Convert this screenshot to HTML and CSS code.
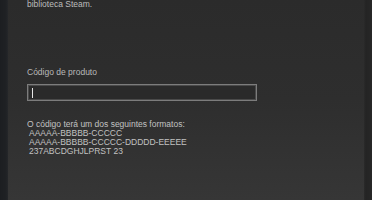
FILE: index.html
```html
<!DOCTYPE html>
<html lang="pt">
  <head>
    <meta charset="UTF-8" />
    <meta name="viewport" content="width=device-width, initial-scale=1.0" />
    <title>Ativar um produto</title>
    <link rel="stylesheet" href="styles.css">
  </head>
  <body>
    <div class="window">
      <div class="side_left"></div>
      <div class="panel">
        <p class="intro">biblioteca Steam.</p>
        <label class="field_label" for="code">Código de produto</label>
        <div class="code_input" id="code"><span class="caret"></span></div>
        <div class="formats">
          <p>O código terá um dos seguintes formatos:</p>
          <p class="fmt">AAAAA-BBBBB-CCCCC</p>
          <p class="fmt">AAAAA-BBBBB-CCCCC-DDDDD-EEEEE</p>
          <p class="fmt">237ABCDGHJLPRST 23</p>
        </div>
      </div>
      <div class="side_right"></div>
    </div>
  </body>
</html>
```
FILE: styles.css
```css
* {
  margin: 0;
  padding: 0;
  box-sizing: border-box;
}
body {
  background: #2c2c2c;
  font-family: "Liberation Sans", Arial, sans-serif;
  font-size: 8.5px;
  line-height: 9px;
  color: #bdbdbd;
}
.window {
  display: flex;
  width: 372px;
  height: 200px;
  overflow: hidden;
}
.side_left {
  width: 8px;
  background: linear-gradient(to right, #1c1e21 0, #1f2124 6px, #25272a 8px);
}
.side_right {
  width: 8px;
  background: linear-gradient(to right, #2a2a2a 0, #242424 2px, #272727 8px);
}
.panel {
  flex: 1;
  display: flex;
  flex-direction: column;
  align-items: flex-start;
  padding-left: 19px;
  background: linear-gradient(to bottom, #2b2b2b 0, #2e2e2e 100px, #363636 200px);
}
.intro {
  margin-top: 0;
}
.field_label {
  margin-top: 59px;
  color: #b9b9b9;
}
.code_input {
  margin-top: 7px;
  width: 230px;
  height: 17px;
  border: 1px solid #7c7c7c;
  box-shadow: inset 0 0 0 1px #4a4a4a;
  background: #2a2a2a;
  padding: 3px 0 0 4px;
}
.caret {
  display: block;
  width: 1px;
  height: 10px;
  background: #e6e6e6;
}
.formats {
  margin-top: 19px;
  color: #c2c2c2;
}
.fmt {
  padding-left: 2px;
}
```
